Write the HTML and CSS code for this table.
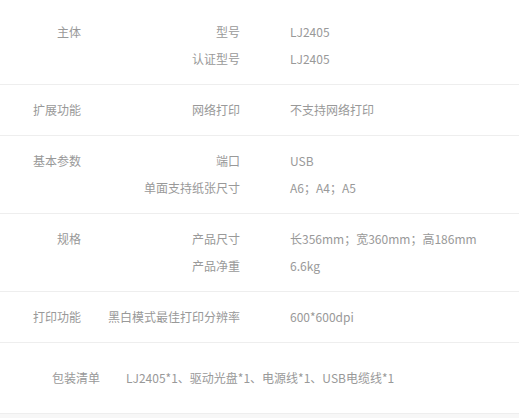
FILE: index.html
```html
<!DOCTYPE html>
<html lang="zh-CN">
<head>
    <meta charset="UTF-8">
    <title>规格参数</title>
    <link rel="stylesheet" href="styles.css">
</head>
<body>
    <div class="spec">
        <div class="group">
            <div class="group-name">主体</div>
            <div class="group-rows">
                <div class="row"><span class="key">型号</span><span class="val">LJ2405</span></div>
                <div class="row"><span class="key">认证型号</span><span class="val">LJ2405</span></div>
            </div>
        </div>

        <div class="group">
            <div class="group-name">扩展功能</div>
            <div class="group-rows">
                <div class="row"><span class="key">网络打印</span><span class="val">不支持网络打印</span></div>
            </div>
        </div>

        <div class="group">
            <div class="group-name">基本参数</div>
            <div class="group-rows">
                <div class="row"><span class="key">端口</span><span class="val">USB</span></div>
                <div class="row"><span class="key">单面支持纸张尺寸</span><span class="val">A6；A4；A5</span></div>
            </div>
        </div>

        <div class="group">
            <div class="group-name">规格</div>
            <div class="group-rows">
                <div class="row"><span class="key">产品尺寸</span><span class="val">长356mm；宽360mm；高186mm</span></div>
                <div class="row"><span class="key">产品净重</span><span class="val">6.6kg</span></div>
            </div>
        </div>

        <div class="group">
            <div class="group-name">打印功能</div>
            <div class="group-rows">
                <div class="row"><span class="key">黑白模式最佳打印分辨率</span><span class="val">600*600dpi</span></div>
            </div>
        </div>

        <div class="package">
            <div class="package-name">包装清单</div>
            <div class="package-list">LJ2405*1、驱动光盘*1、电源线*1、USB电缆线*1</div>
        </div>
    </div>
</body>
</html>
```

FILE: styles.css
```css
* {
    margin: 0;
    padding: 0;
    box-sizing: border-box;
}

body {
    font-family: "Noto Sans CJK SC", "Noto Sans", sans-serif;
    font-size: 12px;
    color: #999;
    background: #f7f7f7;
}

.spec {
    background: white;
    padding-top: 7px;
}

.group {
    display: flex;
    padding: 12px 0;
    border-bottom: 1px solid #eee;
    line-height: 26px;
}

.group-name {
    width: 81px;
    text-align: right;
}

.group-rows {
    flex: 1;
    display: flex;
    flex-direction: column;
    gap: 1px;
}

.row {
    display: flex;
}

.key {
    width: 159px;
    text-align: right;
}

.val {
    padding-left: 50px;
}

.package {
    display: flex;
    padding: 22px 0;
    line-height: 26px;
    border-bottom: 1px solid #eee;
}

.package-name {
    width: 100px;
    text-align: right;
}

.package-list {
    padding-left: 26px;
}
```
